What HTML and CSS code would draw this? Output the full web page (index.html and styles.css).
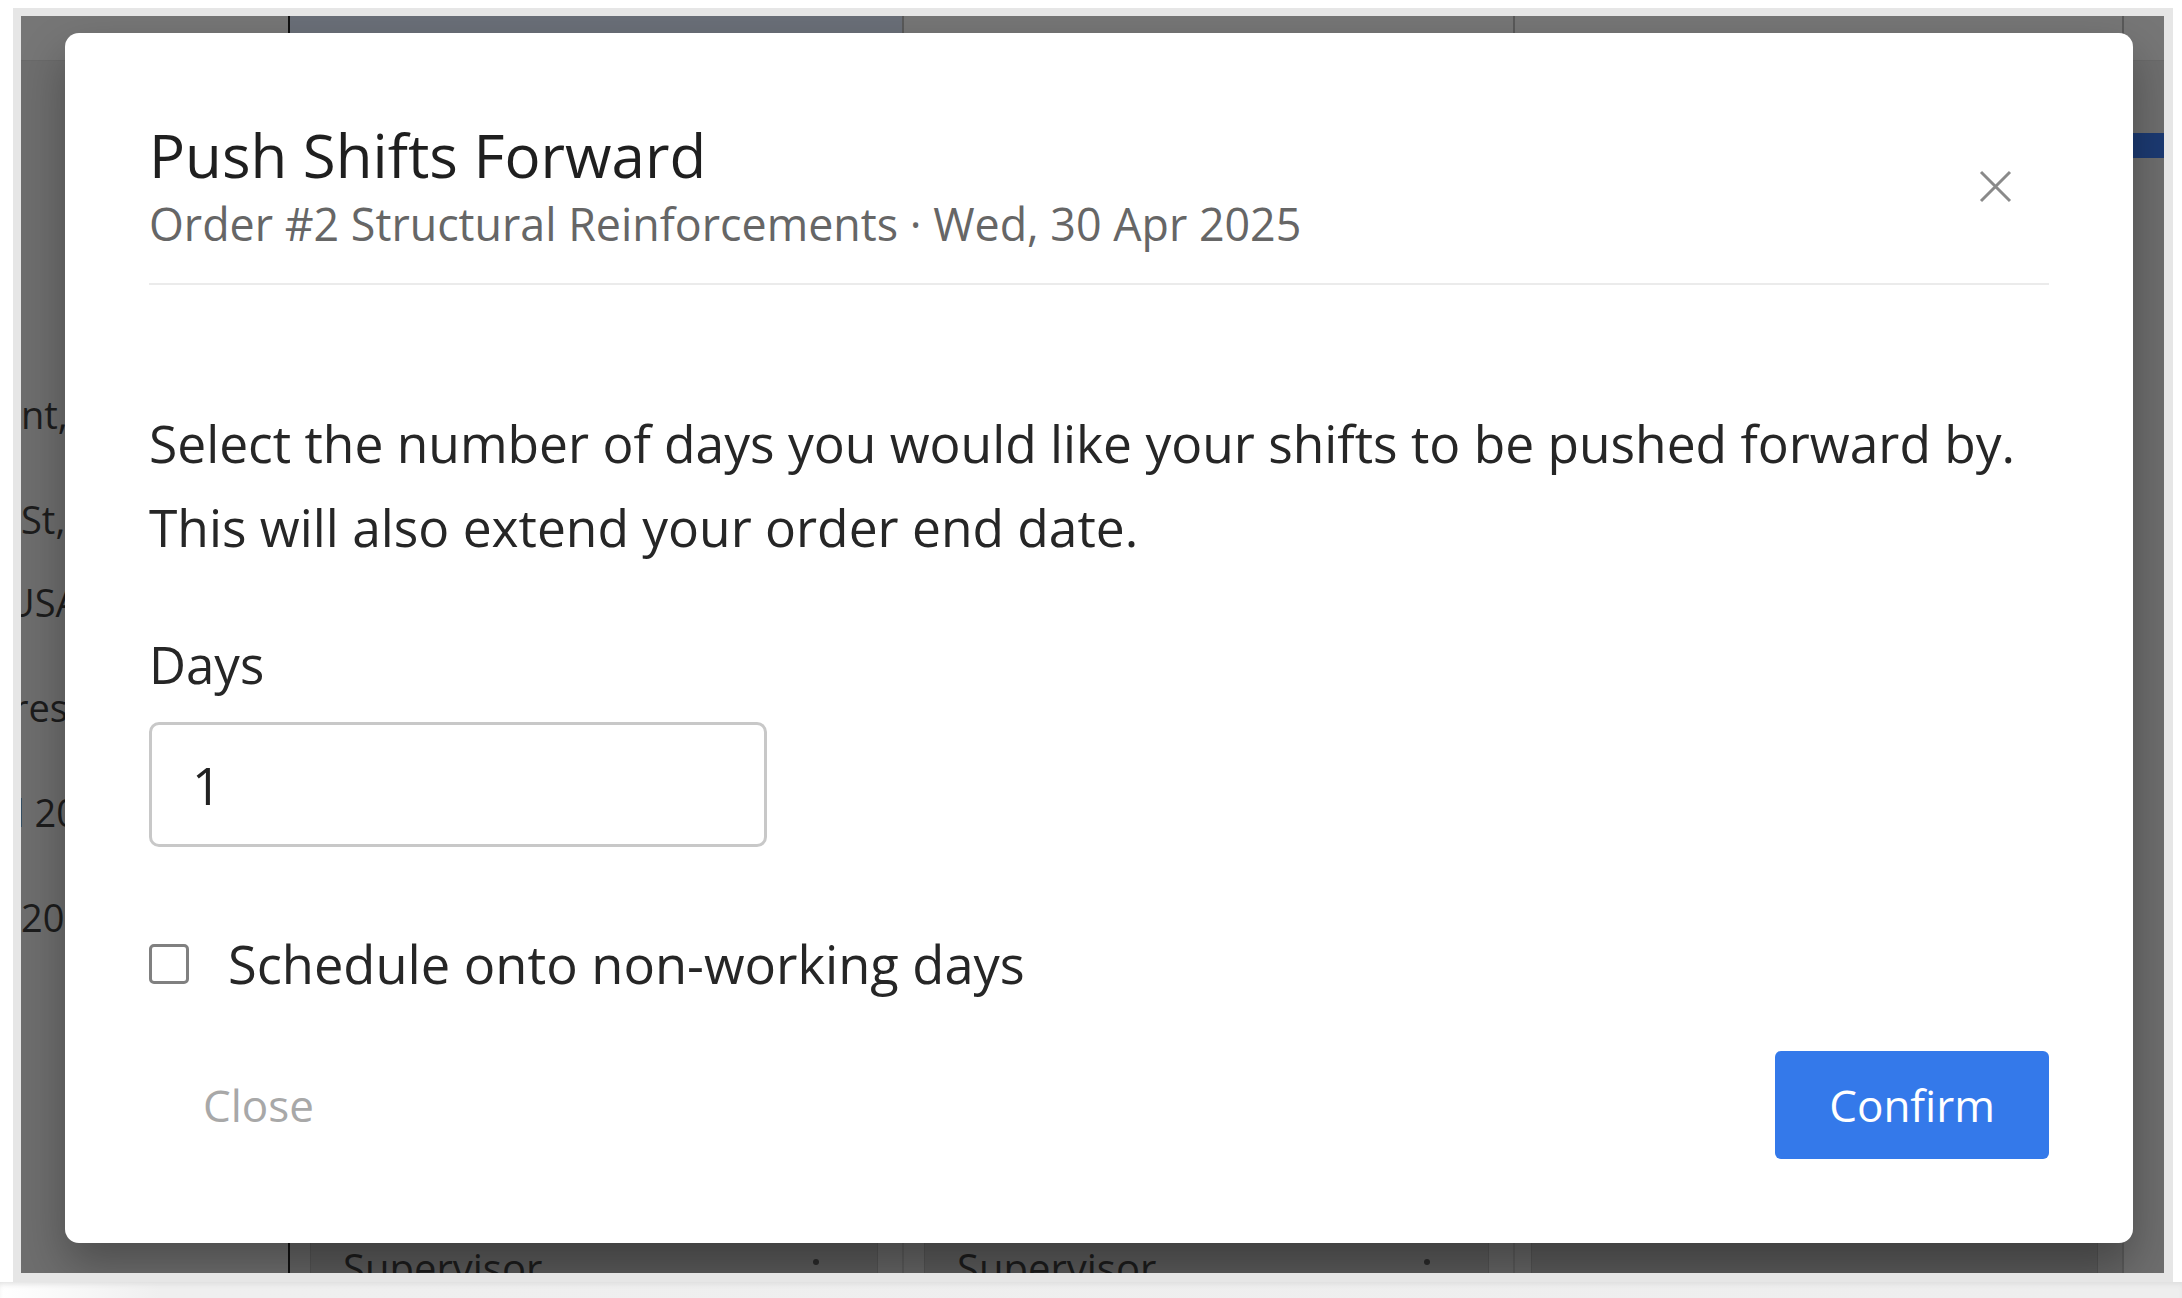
FILE: index.html
```html
<!DOCTYPE html>
<html lang="en">
<head>
<meta charset="utf-8">
<title>Push Shifts Forward</title>
<link rel="stylesheet" href="styles.css">
</head>
<body>
<div class="screen">
  <div class="backdrop">
    <div class="page">
      <aside class="side">
        <div class="head"></div>
        <div class="side-lines">
          <p>nt,</p>
          <p class="tight">St,</p>
          <p class="clip-u">USA</p>
          <p class="clip-r">res</p>
          <p class="clip-l">l 20</p>
          <p>20</p>
        </div>
      </aside>
      <section class="col">
        <div class="head head-active"></div>
        <div class="card"><span>Supervisor</span><i class="dot"></i></div>
      </section>
      <section class="col">
        <div class="head"></div>
        <div class="card"><span>Supervisor</span><i class="dot"></i></div>
      </section>
      <section class="col">
        <div class="head"></div>
        <div class="card card-empty"></div>
      </section>
      <div class="rail">
        <div class="head"></div>
        <div class="rail-bar"></div>
      </div>
    </div>

    <div class="modal" role="dialog" aria-labelledby="dlg-title">
      <header class="modal-head">
        <div class="titles">
          <h1 id="dlg-title">Push Shifts Forward</h1>
          <div class="sub">Order #2 Structural Reinforcements · Wed, 30 Apr 2025</div>
        </div>
        <button class="x" aria-label="Close">
          <svg viewBox="0 0 33 33" width="33" height="33"><path d="M2 2 L31 31 M31 2 L2 31" stroke="#8a8a8a" stroke-width="3" fill="none"/></svg>
        </button>
      </header>
      <p class="lead">Select the number of days you would like your shifts to be pushed forward by.<br>This will also extend your order end date.</p>
      <label class="field-label" for="days">Days</label>
      <input id="days" class="days" type="text" value="1">
      <label class="check-row">
        <input type="checkbox" class="box">
        <span>Schedule onto non-working days</span>
      </label>
      <footer class="modal-foot">
        <button class="btn-close">Close</button>
        <button class="btn-confirm">Confirm</button>
      </footer>
    </div>
  </div>
</div>
<div class="floor"></div>
</body>
</html>
```

FILE: styles.css
```css
html, body {
  margin: 0;
  padding: 0;
  width: 2182px;
  height: 1298px;
  overflow: hidden;
  background: #ffffff;
  font-family: "Open Sans", "Noto Sans", sans-serif;
}

.screen {
  margin: 8px 9px 0 13px;
  padding: 8px 9px 9px 8px;
  background: #e6e6e6;
  width: 2143px;
  height: 1257px;
}

.backdrop {
  position: relative;
  width: 2143px;
  height: 1257px;
  overflow: hidden;
  background: #6e6e6e;
}

.floor {
  height: 16px;
  background: linear-gradient(to right, #ffffff 0, #efefef 160px, #eeeeee 100%);
  box-shadow: inset 0 4px 6px -3px #d8d8d8;
}

/* ---- page under the overlay ---- */
.page {
  display: flex;
  height: 100%;
}

.head {
  height: 44px;
  background: #767676;
  border-bottom: 1px solid #6a6a6a;
}

.head-active {
  background: #6a6f78;
}

.side {
  width: 267px;
  border-right: 2px solid #111111;
  background: #6e6e6e;
}

.side-lines {
  padding-top: 328px;
}

.side-lines p {
  margin: 0 0 55px;
  font-size: 38px;
  line-height: 50px;
  color: #1c1c1c;
  white-space: nowrap;
}

.side-lines p.tight { margin-bottom: 33px; }
.side-lines p.clip-u { margin-left: -14px; }
.side-lines p.clip-r { margin-left: -8px; }
.side-lines p.clip-l { margin-left: -6px; }

.col {
  display: flex;
  flex-direction: column;
  width: 612px;
  border-right: 2px solid #595959;
  background: #646464;
}

.col:nth-of-type(2) { width: 609px; }
.col:nth-of-type(3) { width: 607px; }

.card {
  margin: auto 24px -43px 20px;
  height: 100px;
  box-sizing: border-box;
  padding: 26px 58px 0 32px;
  background: #5a5a5a;
  border: 1px solid #525252;
  display: flex;
  justify-content: space-between;
  align-items: flex-start;
  font-size: 40px;
  line-height: 50px;
  color: #1c1c1c;
}

.card-empty { margin-left: 16px; }

.dot {
  width: 6px;
  height: 6px;
  margin-top: 16px;
  border-radius: 50%;
  background: #2a2a2a;
}

.rail {
  flex: 1;
  background: #6e6e6e;
}

.rail-bar {
  margin-top: 72px;
  height: 25px;
  background: #1c3a72;
}

/* ---- modal ---- */
.modal {
  position: absolute;
  left: 44px;
  top: 17px;
  width: 2068px;
  box-sizing: border-box;
  padding: 86px 84px 84px;
  background: #ffffff;
  border-radius: 14px;
  box-shadow: 0 22px 46px rgba(0, 0, 0, 0.3);
  display: flex;
  flex-direction: column;
  align-items: flex-start;
}

.modal-head {
  align-self: stretch;
  display: flex;
  justify-content: space-between;
  align-items: center;
  padding-bottom: 29px;
  border-bottom: 2px solid #ebebeb;
}

.modal-head h1 {
  margin: 0;
  font-size: 60px;
  line-height: 72px;
  font-weight: 500;
  color: #1f1f1f;
}

.sub {
  margin-top: 3px;
  font-size: 44.8px;
  line-height: 60px;
  color: #666666;
}

.x {
  width: 33px;
  height: 33px;
  margin-right: 37px;
  padding: 0;
  border: none;
  background: none;
  display: flex;
}

.lead {
  margin: 116px 0 0;
  font-size: 51.5px;
  line-height: 84px;
  color: #262626;
  white-space: nowrap;
}

.field-label {
  margin-top: 65px;
  font-size: 51px;
  line-height: 60px;
  color: #262626;
}

.days {
  margin-top: 28px;
  width: 618px;
  height: 125px;
  box-sizing: border-box;
  padding: 0 0 0 40px;
  border: 3px solid #c8c8c8;
  border-radius: 10px;
  font-family: inherit;
  font-size: 51px;
  color: #222222;
  outline: none;
}

.check-row {
  margin-top: 87px;
  height: 60px;
  display: flex;
  align-items: center;
  gap: 39px;
  font-size: 52.4px;
  line-height: 60px;
  color: #262626;
}

.box {
  appearance: none;
  -webkit-appearance: none;
  margin: 0;
  width: 40px;
  height: 40px;
  box-sizing: border-box;
  border: 3px solid #808080;
  border-radius: 5px;
  background: #ffffff;
}

.modal-foot {
  align-self: stretch;
  margin-top: 57px;
  display: flex;
  justify-content: space-between;
  align-items: center;
}

.btn-close,
.btn-confirm {
  height: 108px;
  padding: 0 54px;
  border: none;
  font-family: inherit;
  font-size: 44px;
}

.btn-close {
  background: none;
  color: #a8a8a8;
}

.btn-confirm {
  background: #3479ea;
  color: #ffffff;
  border-radius: 6px;
}
```
